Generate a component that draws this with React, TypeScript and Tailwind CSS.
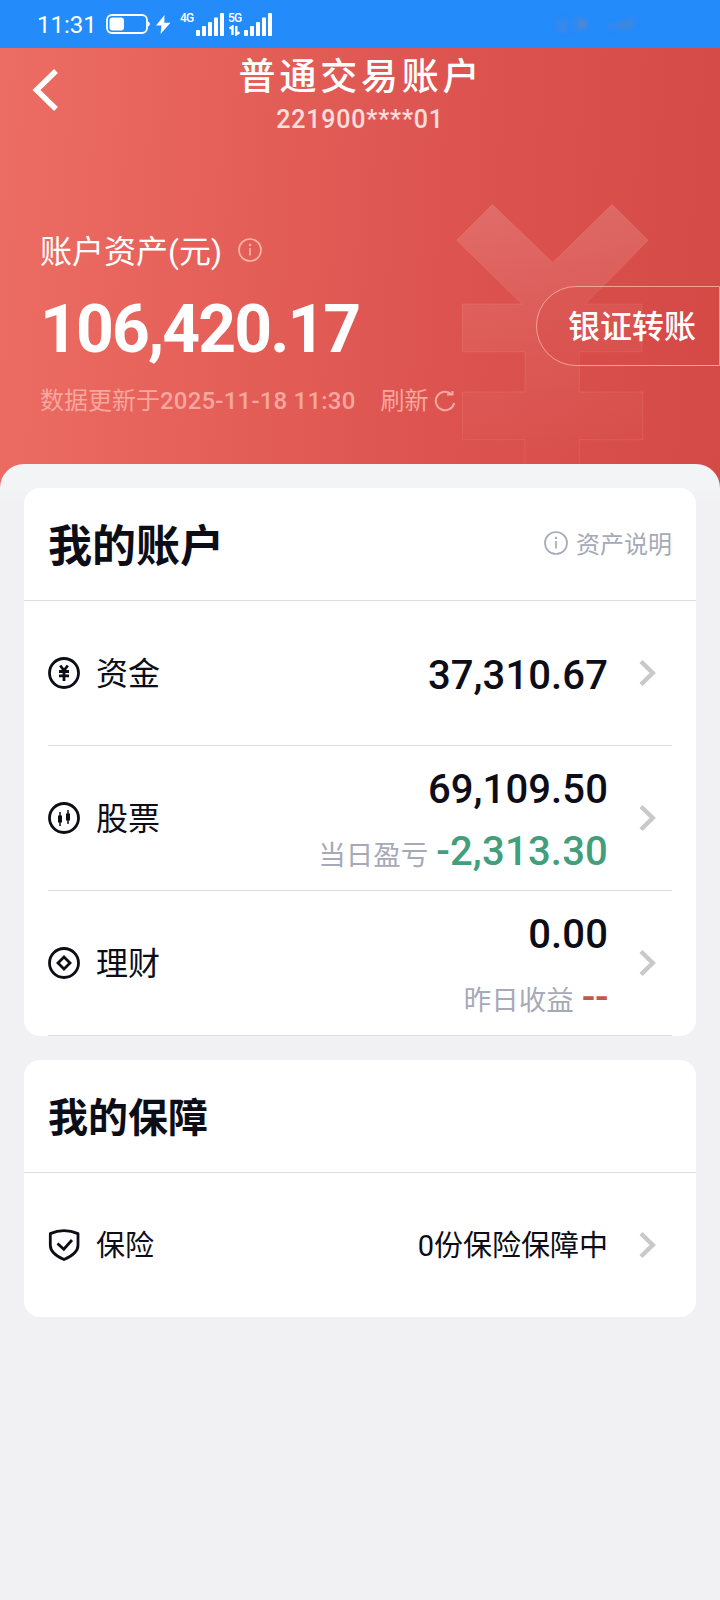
import type { ReactNode } from "react";
import { clsx } from "clsx";

function SignalBars() {
  return (
    <svg width="28" height="23" viewBox="0 0 28 23" fill="#fff">
      <rect x="0" y="17" width="4" height="6" rx="0.8" />
      <rect x="6" y="13" width="4" height="10" rx="0.8" />
      <rect x="12" y="9" width="4" height="14" rx="0.8" />
      <rect x="18" y="4.5" width="4" height="18.5" rx="0.8" />
      <rect x="24" y="0" width="4" height="23" rx="0.8" />
    </svg>
  );
}

function StatusBar() {
  return (
    <div className="flex h-12 items-center bg-[#248bfb] pl-[37px] text-white">
      <span className="mt-[2px] w-[59px] text-[24px] leading-none">11:31</span>
      <svg className="ml-[10px]" width="44" height="20" viewBox="0 0 44 20" fill="none">
        <rect x="1" y="1" width="40" height="18" rx="5" stroke="#fff" strokeWidth="1.8" />
        <rect x="3.5" y="3.5" width="14.5" height="13" rx="3" fill="#fff" />
        <path d="M42 7.5v5c1.3-.4 1.8-1.3 1.8-2.5s-.5-2.1-1.8-2.5Z" fill="#fff" />
      </svg>
      <svg className="ml-[6px]" width="15" height="19" viewBox="0 0 15 19" fill="#fff">
        <path d="M8.5 0 0 10.5h5.500L4.500 19 14.500 7.800H8.300L8.500 0Z" />
      </svg>
      <div className="ml-[9px] flex h-[23px] w-[16px] items-start text-[12px] font-medium leading-[10px] tracking-[-0.7px]">4G</div>
      <SignalBars />
      <div className="ml-[4px] flex h-[23px] w-[16px] flex-col justify-between">
        <span className="text-[12px] font-medium leading-[10px] tracking-[-0.7px]">5G</span>
        <svg className="ml-[1px]" width="12" height="11" viewBox="0 0 12 11" fill="none" stroke="#fff" strokeWidth="2.4">
          <path d="M.5 3.500 3.500 1.500V10M7.300 1v8.300l3.200-2.100" />
        </svg>
      </div>
      <SignalBars />
      <svg className="ml-[270px] blur-[2px]" width="104" height="30" viewBox="0 0 104 30">
        <path d="M14 10h12v14H14zM32 8h9v14h-9zM66 14h14v6H66zM84 8h9v12h-9z" fill="#5c84c4" opacity="0.3" />
        <circle cx="41" cy="15" r="5" fill="#6d85b3" opacity="0.5" />
        <circle cx="82" cy="16" r="4" fill="#5f7fae" opacity="0.5" />
      </svg>
    </div>
  );
}

function InfoIcon() {
  return (
    <svg className="-mt-[2px]" width="24" height="24" viewBox="0 0 24 24" fill="none" stroke="currentColor" strokeWidth="1.7">
      <circle cx="12" cy="12" r="11" />
      <path d="M12 10v7.500" />
      <circle cx="12" cy="7" r="1.200" fill="currentColor" stroke="none" />
    </svg>
  );
}

function Chevron() {
  return (
    <svg className="ml-[31px] mr-[15px] shrink-0" width="18" height="28" viewBox="0 0 18 28" fill="none" stroke="#c9c9cb" strokeWidth="4.500">
      <path d="m2 2.500 11.700 11.500L2 25.500" />
    </svg>
  );
}

function YenWatermark() {
  return (
    <svg className="absolute left-[456px] top-[156px]" width="194" height="260" viewBox="0 0 194 260">
      <defs>
        <linearGradient id="yen" x1="0" y1="0" x2="0" y2="1">
          <stop offset="0" stopColor="#fff" stopOpacity="0.15" />
          <stop offset="0.45" stopColor="#fff" stopOpacity="0.07" />
          <stop offset="1" stopColor="#fff" stopOpacity="0" />
        </linearGradient>
        <linearGradient id="yenEdge" x1="0" y1="0" x2="0" y2="1">
          <stop offset="0" stopColor="#ff9c90" stopOpacity="0.25" />
          <stop offset="1" stopColor="#ff9c90" stopOpacity="0.15" />
        </linearGradient>
      </defs>
      <path
        d="M36.300 .5 96.700 58.700 156 .5 192 36.300 129.300 100H186v47.700h-62.700V188h63.400v47.700h-63.400V262H69v-26.300H6.300V188H69v-40.300H6.300V100h60L.7 36.300Z"
        fill="url(#yen)"
        stroke="url(#yenEdge)"
      />
    </svg>
  );
}

function AccountHeader() {
  return (
    <header className="relative h-[440px] bg-linear-[94deg,#ec6d63_0%,#e35d57_38%,#dc534f_62%,#d44a46_100%] text-white">
      <YenWatermark />
      <div className="relative flex h-[92px]">
        <svg className="ml-[32px] mt-[20px]" width="28" height="44" viewBox="0 0 28 44" fill="none" stroke="#fff" strokeWidth="5.500">
          <path d="M24 3 4.500 22 24 41" />
        </svg>
        <div className="flex w-[600px] flex-col items-center pt-[11px]">
          <h1 className="pl-[2px] text-[37px] font-medium leading-[38px] tracking-[3.800px]">普通交易账户</h1>
          <p className="mt-[9px] text-[25px] font-medium leading-[28px] tracking-[0.800px] text-white/80">221900****01</p>
        </div>
      </div>
      <div className="relative flex items-start justify-between pl-[40px]">
        <div className="pt-[91px]">
          <div className="flex h-[40px] items-center gap-[16px]">
            <span className="mt-[2px] text-[32px] leading-[40px]">账户资产(元)</span>
            <span className="text-[#ffb3a8]">
              <InfoIcon />
            </span>
          </div>
          <div className="mt-[23px] text-[66px] font-bold leading-[72px] tracking-[-1.900px]">106,420.17</div>
          <div className="mt-[19px] flex h-[32px] items-center text-[24px] leading-[32px] text-[#f6a79f]">
            <span>数据更新于</span>
            <span className="font-medium tracking-[0.200px]">2025-11-18 11:30</span>
            <span className="ml-[25px]">刷新</span>
            <svg className="ml-[5px]" width="22" height="22" viewBox="0 0 22 22" fill="none" stroke="currentColor" strokeWidth="2">
              <path d="M17.500 4.200A9.300 9.300 0 1 0 20.200 13M13 4.500h5.500V1" />
            </svg>
          </div>
        </div>
        <button className="mt-[146px] flex h-20 w-[184px] shrink-0 items-center rounded-l-full border border-[#f3a29a] bg-[#d74a47]/30 pl-[31px] pt-[2px] text-[32px] font-medium leading-[40px]">
          银证转账
        </button>
      </div>
    </header>
  );
}

const iconProps = { width: 32, height: 32, viewBox: "0 0 32 32", fill: "none", stroke: "#0d0d17", strokeWidth: 2.8 };

const YenIcon = () => (
  <svg {...iconProps}>
    <circle cx="16" cy="16" r="14.500" />
    <path d="m12.200 8.500 3.800 5 3.800-5M11 14.500h10M11 18.800h10M16 13v11" strokeWidth="2.800" />
  </svg>
);

const StockIcon = () => (
  <svg {...iconProps}>
    <circle cx="16" cy="16" r="14.500" />
    <path d="M12 10v14M20 8v14" strokeWidth="1.500" />
    <path d="M12 13.500v7M20 11.500v7" strokeWidth="4" />
  </svg>
);

const WealthIcon = () => (
  <svg {...iconProps}>
    <circle cx="16" cy="16" r="14.500" />
    <path d="m16 10 6 6-6 6-6-6Z" />
  </svg>
);

const ShieldIcon = () => (
  <svg {...iconProps}>
    <path d="M16 1.700c4.800 0 9.300.9 14 2.900v11.700c0 6.700-5.700 10.700-14 14.200C7.700 27 2.300 23 2.300 16.300V4.600C6.800 2.600 11.200 1.700 16 1.700Z" strokeLinejoin="round" />
    <path d="m9.500 14.500 6.300 5.700L24 11" />
  </svg>
);

function CardTitle({ title, className, children }: { title: string; className: string; children?: ReactNode }) {
  return (
    <div className="flex h-[113px] items-center justify-between border-b border-[#dcdcdf] px-6">
      <h2 className={clsx("font-bold leading-[56px]", className)}>{title}</h2>
      {children}
    </div>
  );
}

type RowProps = { icon: ReactNode; label: string; last?: boolean; children: ReactNode };

function Row({ icon, label, last, children }: RowProps) {
  return (
    <div className={clsx("mx-6 flex items-center", last ? "h-[144px]" : "h-[145px] border-b border-[#dcdcdf]")}>
      {icon}
      <span className={clsx("ml-4 mt-[2px] leading-[40px]", last ? "text-[29px]" : "text-[32px]")}>{label}</span>
      <div className="ml-auto flex flex-col items-end">{children}</div>
      <Chevron />
    </div>
  );
}

function Amount({ value }: { value: string }) {
  return <span className="mt-[6px] text-[40px] font-medium leading-[48px] tracking-[0.100px]">{value}</span>;
}

export default function App() {
  return (
    <div className="flex min-h-[1600px] w-[720px] flex-col overflow-hidden bg-[#f1f0f3] font-[Roboto,'Noto_Sans_CJK_SC',sans-serif] text-[#0d0d17]">
      <StatusBar />
      <AccountHeader />
      <main className="relative -mt-6 flex flex-col gap-6 rounded-t-[24px] bg-linear-[180deg,#f3f4f5_0px,#f3f4f5_24px,#f1f0f3_40px] px-6 pt-6">
        <section className="rounded-[16px] bg-white">
          <CardTitle title="我的账户" className="pt-[5px] text-[44px]">
            <div className="flex items-center gap-2 text-[#a6aab8]">
              <InfoIcon />
              <span className="mt-[1px] text-[24px] leading-[32px]">资产说明</span>
            </div>
          </CardTitle>
          <Row icon={<YenIcon />} label="资金">
            <Amount value="37,310.67" />
          </Row>
          <Row icon={<StockIcon />} label="股票">
            <Amount value="69,109.50" />
            <div className="mt-[14px] flex h-[48px] items-center">
              <span className="mt-[8px] text-[27.500px] text-[#a6a9b8]">当日盈亏</span>
              <span className="ml-2 text-[40px] font-medium leading-[48px] tracking-[0.200px] text-[#429e7b]">-2,313.30</span>
            </div>
          </Row>
          <Row icon={<WealthIcon />} label="理财">
            <Amount value="0.00" />
            <div className="mt-[14px] flex h-[48px] items-center">
              <span className="mt-[8px] text-[27.500px] text-[#a6a9b8]">昨日收益</span>
              <span className="ml-2 mt-[2px] text-[40px] font-medium leading-[48px] tracking-[-0.500px] text-[#c8564b]">--</span>
            </div>
          </Row>
        </section>
        <section className="rounded-[16px] bg-white">
          <CardTitle title="我的保障" className="pt-[6px] text-[40px]" />
          <Row icon={<ShieldIcon />} label="保险" last>
            <span className="mt-[1px] text-[29px] leading-[40px]">0份保险保障中</span>
          </Row>
        </section>
      </main>
    </div>
  );
}
